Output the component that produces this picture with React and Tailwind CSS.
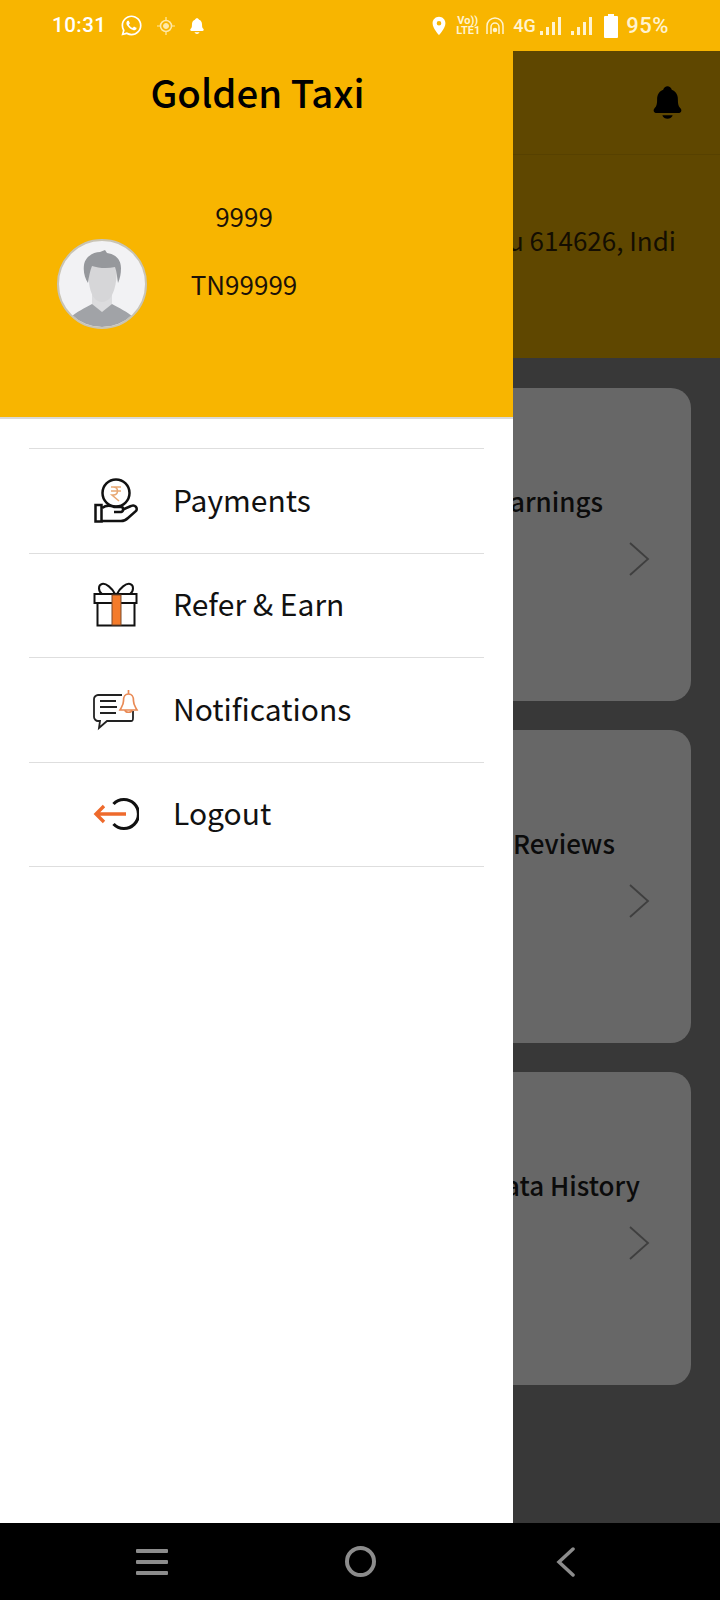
import React from "react";
import { FaWhatsapp } from "react-icons/fa";
import { IoNotifications } from "react-icons/io5";
import { MdLocationOn } from "react-icons/md";

const menuItems = [
  { label: "Payments", icon: <PaymentsIcon /> },
  { label: "Refer & Earn", icon: <GiftIcon /> },
  { label: "Notifications", icon: <NotifyIcon /> },
  { label: "Logout", icon: <LogoutIcon /> },
];

const cards = [
  { label: "arnings", indent: "ml-[-3px]" },
  { label: "Reviews", indent: "ml-0" },
  { label: "ata History", indent: "ml-[-8px]" },
];

function PaymentsIcon() {
  return (
    <svg width="46" height="46" viewBox="93 477 46 46" fill="none" stroke="#111" strokeWidth="2.500">
      <circle cx="116" cy="492" r="13.500" />
      <path d="M95.500 504h6v16.500h-6z" />
      <path d="M102 507c4-3 8-3 12-1h7c3 0 3 4 0 5h-7M122 509l9-4c4-2 7 2 5 5l-8 7c-2 2-4 3-7 3h-19" fill="#fff" />
      <path d="M111 486h10M111 490h10M113 486c6 0 6 8 0 8h-1l7 6" stroke="#e8a873" strokeWidth="1.600" />
    </svg>
  );
}

function GiftIcon() {
  return (
    <svg width="46" height="46" viewBox="93 582 46 46" fill="none" stroke="#111" strokeWidth="2">
      <path d="M115 594c-3-6-9-11-13-10-4 1-4 7 0 10M117 594c3-6 9-11 13-10 4 1 4 7 0 10" />
      <rect x="94.500" y="594" width="42" height="9" />
      <path d="M97.500 603v22.500h37V603" />
      <rect x="112" y="595" width="9" height="30" fill="#f47b2a" stroke="#7a4a2a" strokeWidth="1" />
    </svg>
  );
}

function NotifyIcon() {
  return (
    <svg width="46" height="42" viewBox="93 689 46 42" fill="none">
      <path d="M122 695H98c-2 0-4 2-4 4v18c0 2 2 4 4 4h2l-1 7 8-7h24c2 0 2-1 2-3v-7" stroke="#222" strokeWidth="1.800" />
      <path d="M100 701h16M100 707h17M100 713h16" stroke="#222" strokeWidth="1.800" />
      <path d="M128.500 694c-5 0-5 4-5 7 0 4-2 6-3.500 9h17c-1.500-3-3.500-5-3.500-9 0-3 0-7-5-7zM128.500 690v4M125 710c0 3 7 3 7 0" stroke="#e98a55" strokeWidth="1.700" fill="#fff" />
    </svg>
  );
}

function LogoutIcon() {
  return (
    <svg width="46" height="36" viewBox="92 796 46 36" fill="none">
      <path d="M112.500 804a14.500 14.500 0 1 1 0 20" stroke="#111" strokeWidth="3.200" />
      <path d="M125 814H95M103 806l-8 8 8 8" stroke="#ee6a2c" strokeWidth="3.400" />
    </svg>
  );
}

function Avatar() {
  return (
    <div className="h-[90px] w-[90px] shrink-0 overflow-hidden rounded-full border-2 border-[#c9c4b4] bg-[#f2f2f4]">
      <svg width="86" height="86" viewBox="0 0 86 86">
        <path d="M12 76c5-5 14-9 21-13h20c7 4 16 8 21 13-9 7-19 10-31 10s-22-3-31-10z" fill="#a1a3a7" />
        <path d="M33 50h20v13l-10 8-10-8z" fill="#dcdcde" />
        <path d="M29 26c0-8 29-8 29 0 0 15-3 35-15 35S29 41 29 26z" fill="#d6d6d8" />
        <path d="M29 42c-3-5-5-11-4-18 1-8 9-13 16-13l5-2 2 3c8 1 14 6 14 15 0 6-1 10-3 15-1-5-1-11-3-16-8 2-17 1-23-1-2 5-3 10-4 17z" fill="#96989c" />
      </svg>
    </div>
  );
}

function SignalIcon({ className }) {
  return (
    <div className={`flex h-[18px] items-end gap-[3px] ${className}`}>
      <div className="h-[4px] w-[3px] bg-[#fff3d0]" />
      <div className="h-[8px] w-[3px] bg-[#fff3d0]" />
      <div className="h-[13px] w-[3px] bg-[#fff3d0]" />
      <div className="h-[18px] w-[3px] bg-[#fff3d0]" />
    </div>
  );
}

function StatusBar() {
  return (
    <div className="flex h-[51px] shrink-0 items-center justify-between bg-[#f8b500] pl-[52px] pr-[51px] text-white" style={{ fontFamily: "Roboto, sans-serif" }}>
      <div className="flex items-center">
        <span className="text-[20.500px] font-medium tracking-[0.5px]">10:31</span>
        <FaWhatsapp className="ml-[13px] text-[23px]" />
        <svg className="ml-[14px]" width="18" height="18" viewBox="0 0 18 18" fill="none" stroke="#ffe9a8">
          <circle cx="9" cy="9" r="5.500" strokeWidth="1.500" />
          <circle cx="9" cy="9" r="2.500" fill="#ffe9a8" />
          <path d="M9 0v3M9 15v3M0 9h3M15 9h3" strokeWidth="1.200" />
        </svg>
        <IoNotifications className="ml-[13px] text-[18px]" />
      </div>
      <div className="flex items-center">
        <MdLocationOn className="text-[22px]" />
        <div className="ml-[6px] flex w-[24px] flex-col text-[11px] font-bold leading-[10px] text-[#fff3d0]">
          <span className="pl-[1px]">Vo))</span>
          <span>LTE1</span>
        </div>
        <svg className="ml-[6px]" width="18" height="18" viewBox="0 0 18 18" fill="none" stroke="#fff3d0" strokeWidth="1.500">
          <path d="M1 17V9a8 8 0 0 1 16 0v8M5 17v-7a4 4 0 0 1 8 0v7" />
          <circle cx="9" cy="13" r="1.500" fill="#fff3d0" />
        </svg>
        <span className="ml-[9px] w-[20px] text-[18px] font-medium text-[#fff3d0]">4G</span>
        <SignalIcon className="ml-[7px]" />
        <SignalIcon className="ml-[10px]" />
        <svg className="ml-[12px]" width="14" height="24" viewBox="0 0 14 24" fill="#fff">
          <path d="M4 0h6v2h3a1 1 0 0 1 1 1v20a1 1 0 0 1-1 1H1a1 1 0 0 1-1-1V3a1 1 0 0 1 1-1h3z" />
        </svg>
        <span className="ml-[8px] text-[22px] font-medium tracking-[0.5px] text-[#fff3d0]">95%</span>
      </div>
    </div>
  );
}

function Drawer() {
  return (
    <div className="flex w-[513px] shrink-0 flex-col bg-white">
      <div className="h-[368px] shrink-0 border-b-2 border-[#d9d9d9] bg-[#f8b500]">
        <div className="pl-[2px] pt-[10px] text-center text-[38.400px] font-medium leading-[60px] text-black">Golden Taxi</div>
        <div className="mt-[76px] flex items-start pl-[57px]">
          <div className="pt-[42px]">
            <Avatar />
          </div>
          <div className="flex w-[194px] flex-col items-center text-[26px] leading-[38px] text-[#1c1208]">
            <span>9999</span>
            <span className="mt-[30px]">TN99999</span>
          </div>
        </div>
      </div>
      <div className="mx-[29px] mt-[29px] border-t border-[#dedede]">
        {menuItems.map((item) => (
          <div key={item.label} className="flex h-[104.500px] items-center border-b border-[#dedede]">
            <div className="flex w-[144px] justify-center pl-[31px] pr-[2px]">{item.icon}</div>
            <span className="mt-[-4px] text-[30px] leading-[40px] text-[#111]">{item.label}</span>
          </div>
        ))}
      </div>
    </div>
  );
}

function BehindDrawer() {
  return (
    <div className="flex min-w-0 flex-1 flex-col overflow-hidden bg-[#383838]">
      <div className="flex h-[104px] shrink-0 items-center justify-end border-b border-[#574100] bg-[#5f4700] pr-[34px]">
        <IoNotifications className="text-[37px] text-black" />
      </div>
      <div className="flex h-[203px] shrink-0 items-start bg-[#5f4700] pt-[66px] text-[26px] leading-[38px] text-[#140e02]">
        <span className="ml-[-5px] whitespace-nowrap">u 614626, Indi</span>
      </div>
      <div className="flex flex-col gap-[29px] pr-[29px] pt-[30px]">
        {cards.map((card) => (
          <div key={card.label} className="h-[313px] rounded-r-[20px] bg-[#676767] pt-[94px]">
            <span className={`block whitespace-nowrap text-[26px] font-medium leading-[38px] text-[#0b0b0b] ${card.indent}`}>{card.label}</span>
            <svg className="ml-[115px] mt-[21px]" width="22" height="36" viewBox="0 0 22 36" fill="none" stroke="#3f3f3f" strokeWidth="1.800">
              <path d="M2 2l18 16L2 34" />
            </svg>
          </div>
        ))}
      </div>
    </div>
  );
}

function NavBar() {
  return (
    <div className="flex h-[77px] shrink-0 items-center bg-black pl-[136px]">
      <div className="flex w-[32px] flex-col gap-[7px]">
        <div className="h-[4px] rounded-[1px] bg-[#8c8c8c]" />
        <div className="h-[4px] rounded-[1px] bg-[#8c8c8c]" />
        <div className="h-[4px] rounded-[1px] bg-[#8c8c8c]" />
      </div>
      <div className="ml-[177px] h-[31px] w-[31px] rounded-full border-[4px] border-[#8c8c8c]" />
      <svg className="ml-[180px]" width="20" height="30" viewBox="0 0 20 30" fill="none" stroke="#8c8c8c" strokeWidth="3.500" strokeLinecap="round">
        <path d="M17 2L3 15l14 13" />
      </svg>
    </div>
  );
}

export default function App() {
  return (
    <div className="flex h-[1600px] w-[720px] flex-col overflow-hidden" style={{ fontFamily: '"Noto Sans CJK SC", "Noto Sans", sans-serif' }}>
      <StatusBar />
      <div className="flex min-h-0 flex-1">
        <Drawer />
        <BehindDrawer />
      </div>
      <NavBar />
    </div>
  );
}
